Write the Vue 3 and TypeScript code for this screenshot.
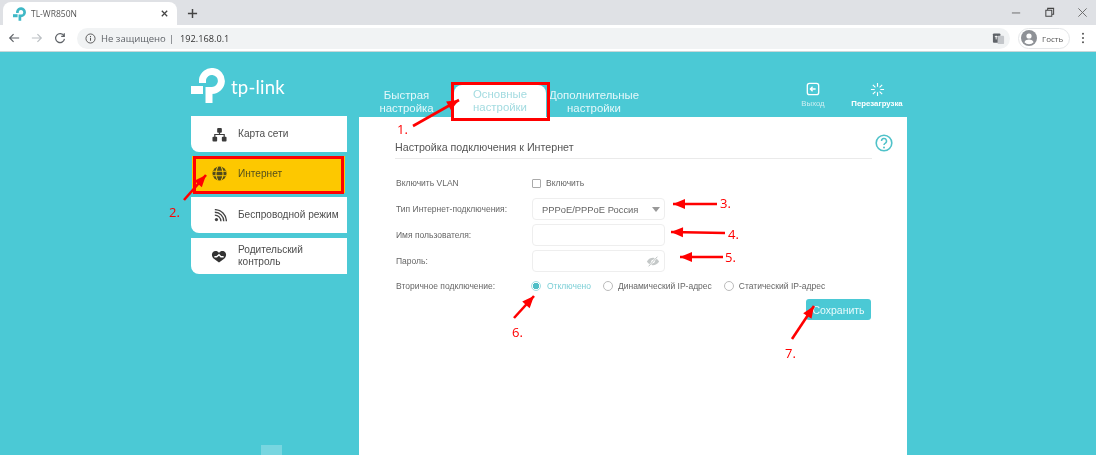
<script setup lang="ts">
interface MenuItem { id: string; label: string[]; active?: boolean }
const menu: MenuItem[] = [
  { id: 'map', label: ['Карта сети'] },
  { id: 'net', label: ['Интернет'], active: true },
  { id: 'wifi', label: ['Беспроводной режим'] },
  { id: 'parent', label: ['Родительский', 'контроль'] },
]
const marks = [
  { t: '1.', cls: 'm1' }, { t: '2.', cls: 'm2' }, { t: '3.', cls: 'm3' }, { t: '4.', cls: 'm4' },
  { t: '5.', cls: 'm5' }, { t: '6.', cls: 'm6' }, { t: '7.', cls: 'm7' },
]
const arrows = [
  { x1: 413, y1: 126, x2: 459, y2: 100 },
  { x1: 184, y1: 200, x2: 206, y2: 175 },
  { x1: 717, y1: 204, x2: 673, y2: 204 },
  { x1: 725, y1: 233, x2: 671, y2: 232 },
  { x1: 723, y1: 257, x2: 680, y2: 257 },
  { x1: 514, y1: 318, x2: 534, y2: 296 },
  { x1: 792, y1: 339, x2: 814, y2: 306 },
]
function head(a: { x1: number; y1: number; x2: number; y2: number }): string {
  const ang = Math.atan2(a.y2 - a.y1, a.x2 - a.x1)
  const l = 12, w = 5
  const bx = a.x2 - l * Math.cos(ang), by = a.y2 - l * Math.sin(ang)
  const nx = -Math.sin(ang) * w, ny = Math.cos(ang) * w
  return `${a.x2},${a.y2} ${bx + nx},${by + ny} ${bx - nx},${by - ny}`
}
</script>

<template>
  <div class="page">
    <div class="tabstrip">
      <div class="tab">
        <svg class="favicon" viewBox="0 0 34 35" width="13" height="14">
          <path d="M11.500 15V11.500A9.500 9.500 0 1 1 21 22.500H18V35" fill="none" stroke="#3fb8c6" stroke-width="7" />
          <path d="M0 22h12" stroke="#3fb8c6" stroke-width="8" />
        </svg>
        <span class="tab-title">TL-WR850N</span>
        <svg class="tab-close" viewBox="0 0 10 10" width="9" height="9">
          <path d="M2 2l6 6M8 2l-6 6" stroke="#444" stroke-width="1.4" />
        </svg>
      </div>
      <svg class="newtab" viewBox="0 0 12 12" width="11" height="11">
        <path d="M6 1v10M1 6h10" stroke="#444" stroke-width="1.6" />
      </svg>
      <div class="winbtns">
        <svg viewBox="0 0 12 12" width="11" height="11"><path d="M1 6.500h9" stroke="#666" stroke-width="1" /></svg>
        <svg viewBox="0 0 12 12" width="11" height="11"><path d="M2 3.500h6.500V10H2zM4 3.500V1.500h6.500V8H8.500" fill="none" stroke="#444" stroke-width="1.1" /></svg>
        <svg viewBox="0 0 12 12" width="11" height="11"><path d="M1.500 1.500l9 9M10.500 1.500l-9 9" stroke="#666" stroke-width="1" /></svg>
      </div>
    </div>

    <div class="toolbar">
      <div class="navbtns">
        <svg viewBox="0 0 14 14" width="12" height="12"><path d="M13 7H2M6.500 2.500L2 7l4.500 4.500" fill="none" stroke="#5f6368" stroke-width="1.4" /></svg>
        <svg viewBox="0 0 14 14" width="12" height="12"><path d="M1 7h11M7.500 2.500L12 7l-4.500 4.500" fill="none" stroke="#bcc0c4" stroke-width="1.4" /></svg>
        <svg viewBox="0 0 14 14" width="12" height="12"><path d="M11.600 4.600A5.200 5.200 0 1 0 12.200 8M12 1.500v3.600H8.400" fill="none" stroke="#5f6368" stroke-width="1.4" /></svg>
      </div>
      <div class="omnibox">
        <svg viewBox="0 0 14 14" width="11" height="11"><circle cx="7" cy="7" r="5.800" fill="none" stroke="#555" stroke-width="1.2" /><path d="M7 6v4M7 3.800v1.200" stroke="#555" stroke-width="1.3" /></svg>
        <span class="insecure">Не защищено</span>
        <span class="sep">|</span>
        <span class="url">192.168.0.1</span>
        <svg class="translate" viewBox="0 0 14 14" width="13" height="13">
          <rect x="1" y="1.500" width="8" height="10" rx="1" fill="#5f6368" />
          <rect x="6" y="4" width="7" height="9" rx="1" fill="#c3c6ca" />
          <path d="M3 5h3M4.500 4v4" stroke="#fff" stroke-width="1" />
        </svg>
      </div>
      <div class="guest">
        <svg viewBox="0 0 16 16" width="16" height="16">
          <circle cx="8" cy="8" r="8" fill="#8e9196" />
          <circle cx="8" cy="6" r="2.600" fill="#fff" />
          <path d="M3.400 12.200c1-2 3-2.600 4.600-2.600s3.600.6 4.600 2.600a6 6 0 0 1-9.200 0z" fill="#fff" />
        </svg>
        <span>Гость</span>
      </div>
      <svg class="dots" viewBox="0 0 4 14" width="4" height="12"><circle cx="2" cy="2" r="1.2" fill="#555" /><circle cx="2" cy="7" r="1.2" fill="#555" /><circle cx="2" cy="12" r="1.2" fill="#555" /></svg>
    </div>

    <div class="stage">
      <aside class="side">
        <div class="logo">
          <svg viewBox="0 0 34 35" width="34" height="35">
            <path d="M11.500 15V11.500A9.500 9.500 0 1 1 21 22.500H18V35" fill="none" stroke="#fff" stroke-width="7" />
            <path d="M0 22h12" stroke="#fff" stroke-width="8" />
          </svg>
          <span class="logotext">tp-link</span>
        </div>
        <div class="menu">
          <div v-for="m in menu" :key="m.id" class="item" :class="[m.id, { on: m.active }]">
            <span class="ico">
              <svg v-if="m.id === 'map'" viewBox="0 0 16 16" width="15" height="15">
                <rect x="5.500" y="1" width="5" height="5" rx="1" fill="#3c3c3c" />
                <rect x="0.500" y="10.500" width="5" height="5" rx="1" fill="#3c3c3c" />
                <rect x="10.500" y="10.500" width="5" height="5" rx="1" fill="#3c3c3c" />
                <path d="M3 11V8h10v3M8 5v3" fill="none" stroke="#3c3c3c" stroke-width="1.3" />
              </svg>
              <svg v-else-if="m.id === 'net'" viewBox="0 0 16 16" width="15" height="15">
                <circle cx="8" cy="8" r="7.500" fill="#514a1c" />
                <path d="M1 5.500h14M1 10.500h14M6 1c-2 4-2 10 0 14M10 1c2 4 2 10 0 14" fill="none" stroke="#fdc800" stroke-width="1.1" />
              </svg>
              <svg v-else-if="m.id === 'wifi'" viewBox="0 0 16 16" width="13" height="13">
                <circle cx="3" cy="13" r="2" fill="#444" />
                <path d="M1 7.500a7.500 7.500 0 0 1 7.500 7.500M1 4a11 11 0 0 1 11 11M1 .8A14.200 14.200 0 0 1 15.200 15" fill="none" stroke="#444" stroke-width="1.700" />
              </svg>
              <svg v-else viewBox="0 0 16 14" width="16" height="13">
                <path d="M8 3.200C6.500.8 3 .5 1.300 2.500c-1.800 2.200-.8 5 1.200 7L8 13.500l5.500-4c2-2 3-4.800 1.200-7C13 .5 9.500.8 8 3.200z" fill="#333" />
                <path d="M3 7.300h2.500L8 5l2 2.300h3" fill="none" stroke="#fff" stroke-width="1.500" />
              </svg>
            </span>
            <span class="lbl"><span v-for="l in m.label" :key="l">{{ l }}</span></span>
          </div>
        </div>
      </aside>

      <section class="right">
        <nav class="nav">
          <div class="navtab quick">Быстрая<br />настройка</div>
          <div class="navtab basic">Основные<br />настройки</div>
          <div class="navtab adv">Дополнительные<br />настройки</div>
          <div class="tools">
            <div class="tool exit">
              <svg viewBox="0 0 16 16" width="14" height="14">
                <rect x="1.500" y="1.500" width="13" height="13" rx="2.500" fill="none" stroke="#fff" stroke-width="1.500" />
                <path d="M11 8H6M7.500 5.500L5 8l2.500 2.500" fill="none" stroke="#fff" stroke-width="1.500" />
              </svg>
              <span>Выход</span>
            </div>
            <div class="tool reboot">
              <svg viewBox="0 0 16 16" width="15" height="15">
                <path d="M8 1v4M8 11v4M1 8h4M11 8h4M3 3l2.800 2.800M10.200 10.200L13 13M13 3l-2.800 2.800M5.800 10.200L3 13" stroke="#fff" stroke-width="1.200" />
              </svg>
              <span>Перезагрузка</span>
            </div>
          </div>
        </nav>
        <div class="panel">
          <div class="head">
            <h1>Настройка подключения к Интернет</h1>
            <svg class="help" viewBox="0 0 18 18" width="18" height="18">
              <circle cx="9" cy="9" r="7.800" fill="none" stroke="#4fc2c9" stroke-width="1.600" />
              <path d="M6.500 7a2.500 2.500 0 1 1 3.600 2.300c-.8.400-1.100.9-1.100 1.800" fill="none" stroke="#4fc2c9" stroke-width="1.500" />
              <circle cx="9" cy="13.400" r="1" fill="#4fc2c9" />
            </svg>
          </div>
          <div class="form">
            <div class="row r1">
              <label>Включить VLAN</label>
              <div class="ctl"><span class="check"></span><span class="opt">Включить</span></div>
            </div>
            <div class="row r2">
              <label>Тип Интернет-подключения:</label>
              <div class="ctl field sel">
                <span>PPPoE/PPPoE Россия</span><i class="caret"></i>
              </div>
            </div>
            <div class="row r3">
              <label>Имя пользователя:</label>
              <div class="ctl field"></div>
            </div>
            <div class="row r4">
              <label>Пароль:</label>
              <div class="ctl field pw">
                <svg viewBox="0 0 16 12" width="14" height="11">
                  <path d="M1 6c2-3 4.300-4.200 7-4.200S13 3 15 6c-2 3-4.300 4.200-7 4.200S3 9 1 6z" fill="#c4c8c8" />
                  <circle cx="8" cy="6" r="2" fill="#fff" />
                  <path d="M13 .5L3 11.500" stroke="#fff" stroke-width="2.200" />
                  <path d="M13 .5L3 11.500" stroke="#b5baba" stroke-width="1" />
                </svg>
              </div>
            </div>
            <div class="row r5">
              <label>Вторичное подключение:</label>
              <div class="ctl radios">
                <span class="radio first"></span><span class="opt active">Отключено</span>
                <span class="radio second"></span><span class="opt">Динамический IP-адрес</span>
                <span class="radio third"></span><span class="opt">Статический IP-адрес</span>
              </div>
            </div>
            <div class="actions"><button type="button">Сохранить</button></div>
          </div>
        </div>
      </section>
    </div>

    <div class="bottom-tab"></div>
    <div class="redbox box-basic"></div>
    <div class="redbox box-net"></div>
    <svg class="arrows" viewBox="0 0 1096 455" width="1096" height="455">
      <g v-for="(a, i) in arrows" :key="i">
        <line :x1="a.x1" :y1="a.y1" :x2="a.x2" :y2="a.y2" stroke="#f00" stroke-width="2.600" />
        <polygon :points="head(a)" fill="#f00" />
      </g>
    </svg>
    <span v-for="k in marks" :key="k.t" class="mark" :class="k.cls">{{ k.t }}</span>
  </div>
</template>

<style scoped>
.page {
  position: relative;
  width: 1096px;
  height: 455px;
  overflow: hidden;
  display: flex;
  flex-direction: column;
  font-family: "Liberation Sans", Arial, sans-serif;
  background: #4bc9d5;
  filter: blur(0.35px);
}
.tabstrip {
  height: 25px;
  flex: none;
  background: #dfe1e5;
  display: flex;
  align-items: center;
  padding-left: 3px;
  box-sizing: border-box;
}
.tab {
  width: 174px;
  height: 23px;
  margin-top: 2px;
  background: #fff;
  border-radius: 8px 8px 0 0;
  display: flex;
  align-items: center;
  padding: 0 8px 0 10px;
  box-sizing: border-box;
}
.favicon { margin-right: 5px; }
.tab-title {
  font: 8.500px "Open Sans", sans-serif;
  color: #555;
  flex: 1;
}
.newtab { margin-left: 10px; margin-top: 1px; }
.winbtns {
  margin-left: auto;
  display: flex;
  gap: 22px;
  padding-right: 8px;
}
.toolbar {
  height: 26px;
  flex: none;
  background: #fff;
  display: flex;
  align-items: center;
  border-bottom: 1px solid #c9d7d9;
}
.navbtns {
  display: flex;
  gap: 11px;
  padding-left: 8px;
  width: 68px;
  box-sizing: border-box;
}
.omnibox {
  width: 933px;
  height: 21px;
  margin-left: 9px;
  border-radius: 11px;
  background: #f1f3f4;
  display: flex;
  align-items: center;
  padding: 0 5px 0 8px;
  box-sizing: border-box;
  font: 9.500px "Open Sans", sans-serif;
}
.insecure { margin-left: 5px; color: #5f6368; }
.sep { margin: 0 6px 0 3px; color: #5f6368; }
.url { color: #333; font-size: 9.200px; }
.translate { margin-left: auto; }
.guest {
  margin-left: 8px;
  width: 52px;
  height: 21px;
  border: 1px solid #e4e6e8;
  border-radius: 11px;
  display: flex;
  align-items: center;
  gap: 5px;
  padding-left: 2px;
  box-sizing: border-box;
  font: 8px "Open Sans", sans-serif;
  color: #555;
  flex: none;
}
.dots { margin-left: 11px; }
.stage {
  flex: 1;
  display: flex;
  padding-left: 191px;
  min-height: 0;
}
.side { width: 156px; flex: none; }
.logo {
  height: 64px;
  display: flex;
  align-items: flex-start;
  padding-top: 16px;
  box-sizing: border-box;
}
.logotext {
  font: 18.500px Lato, sans-serif;
  color: #fff;
  margin: 8px 0 0 6px;
  letter-spacing: .2px;
}
.menu { display: flex; flex-direction: column; }
.item {
  background: #fff;
  height: 36px;
  border-radius: 0 0 0 8px;
  display: flex;
  align-items: center;
  font: 10.100px "Liberation Sans", sans-serif;
  color: #4d4d4d;
}
.item.net {
  margin: 4px 2px 0 1px;
  height: 37px;
  padding-bottom: 2px;
  box-sizing: border-box;
  background: #fdc800;
  color: #54501c;
  border-radius: 0;
}
.item.wifi { margin-top: 4px; }
.item.parent { margin-top: 5px; }
.ico { width: 36px; display: flex; justify-content: flex-end; padding-right: 11px; flex: none; }
.net .ico { width: 35px; }
.lbl { display: flex; flex-direction: column; line-height: 12px; }
.right { width: 548px; margin-left: 12px; display: flex; flex-direction: column; flex: none; }
.nav {
  height: 65px;
  flex: none;
  display: flex;
  color: #e6f8fa;
  font-size: 11.400px;
  line-height: 12.500px;
  text-align: center;
}
.navtab { box-sizing: border-box; }
.quick { width: 95px; padding-top: 37px; }
.basic {
  width: 92px;
  height: 32px;
  margin-top: 33px;
  padding-top: 3px;
  background: #fff;
  border-radius: 8px 8px 0 0;
  color: #a3dbe0;
}
.adv { width: 96px; padding-top: 37px; }
.tools { margin-left: auto; margin-right: -5px; display: flex; padding-top: 30px; }
.tool {
  display: flex;
  flex-direction: column;
  align-items: center;
  font-size: 7.800px;
  line-height: 10px;
  gap: 3px;
}
.exit { width: 30px; color: #cdeef1; }
.reboot { width: 70px; margin-left: 14px; font-weight: 700; color: #fff; gap: 2px; }
.panel {
  flex: 1;
  background: #fff;
  padding: 0 35px 0 36px;
  color: #666;
}
.head {
  position: relative;
  height: 42px;
  border-bottom: 1px solid #eaeaea;
  box-sizing: border-box;
  display: flex;
  align-items: flex-end;
  padding-bottom: 5px;
}
.head h1 { font-size: 10.700px; font-weight: 400; margin: 0; color: #555; line-height: 12px; }
.help { position: absolute; right: -21px; top: 17px; }
.form { font-size: 8.500px; padding-top: 13px; }
.row { display: flex; align-items: center; }
.row label { width: 137px; flex: none; padding-left: 1px; box-sizing: border-box; color: #666; }
.ctl { display: flex; align-items: center; }
.r1 { height: 22px; }
.r2 { margin-top: 4px; }
.r3, .r4 { margin-top: 4px; }
.r5 { margin-top: 3px; height: 21px; }
.check { width: 7px; height: 7px; border: 1px solid #aaa; border-radius: 1px; margin-right: 5px; }
.field {
  width: 133px;
  height: 22px;
  border: 1px solid #eeeeee;
  border-radius: 4px;
  box-sizing: border-box;
  padding: 0 4px 0 9px;
  justify-content: space-between;
}
.sel { font-size: 9.400px; color: #666; }
.caret {
  width: 0;
  height: 0;
  border: 4px solid transparent;
  border-top: 5px solid #999;
  border-bottom: 0;
}
.pw { justify-content: flex-end; }
.radios .radio {
  width: 8px;
  height: 8px;
  border: 1px solid #bbb;
  border-radius: 50%;
  margin-right: 5px;
  flex: none;
}
.radio.first {
  margin-left: -1px;
  margin-right: 6px;
  border-color: #9edde2;
  background: radial-gradient(circle, #4fbfc7 0 3px, #fff 3.500px);
}
.radio.second { margin-left: 12px; }
.radio.third { margin-left: 12px; }
.opt.active { color: #7ccfd6; }
.actions { display: flex; justify-content: flex-end; margin-top: 3px; margin-right: 1px; }
.actions button {
  width: 65px;
  height: 21px;
  border: 0;
  border-radius: 3px;
  background: #4bc9d5;
  color: #e8fbfc;
  font: 10.500px "Liberation Sans", sans-serif;
  padding: 0;
}
.bottom-tab {
  position: absolute;
  left: 261px;
  top: 445px;
  width: 21px;
  height: 10px;
  background: #78d6e0;
}
.redbox {
  position: absolute;
  border: 3px solid #f00;
  box-sizing: border-box;
}
.box-basic { left: 451px; top: 82px; width: 99px; height: 39px; }
.box-net { left: 193px; top: 156px; width: 151px; height: 38px; }
.arrows { position: absolute; left: 0; top: 0; pointer-events: none; }
.mark {
  position: absolute;
  font: 13px "Open Sans", sans-serif;
  color: #f00;
  line-height: 16px;
}
.m1 { left: 397px; top: 121px; }
.m2 { left: 169px; top: 204px; }
.m3 { left: 720px; top: 195px; }
.m4 { left: 728px; top: 226px; }
.m5 { left: 725px; top: 249px; }
.m6 { left: 512px; top: 324px; }
.m7 { left: 785px; top: 345px; }
</style>
